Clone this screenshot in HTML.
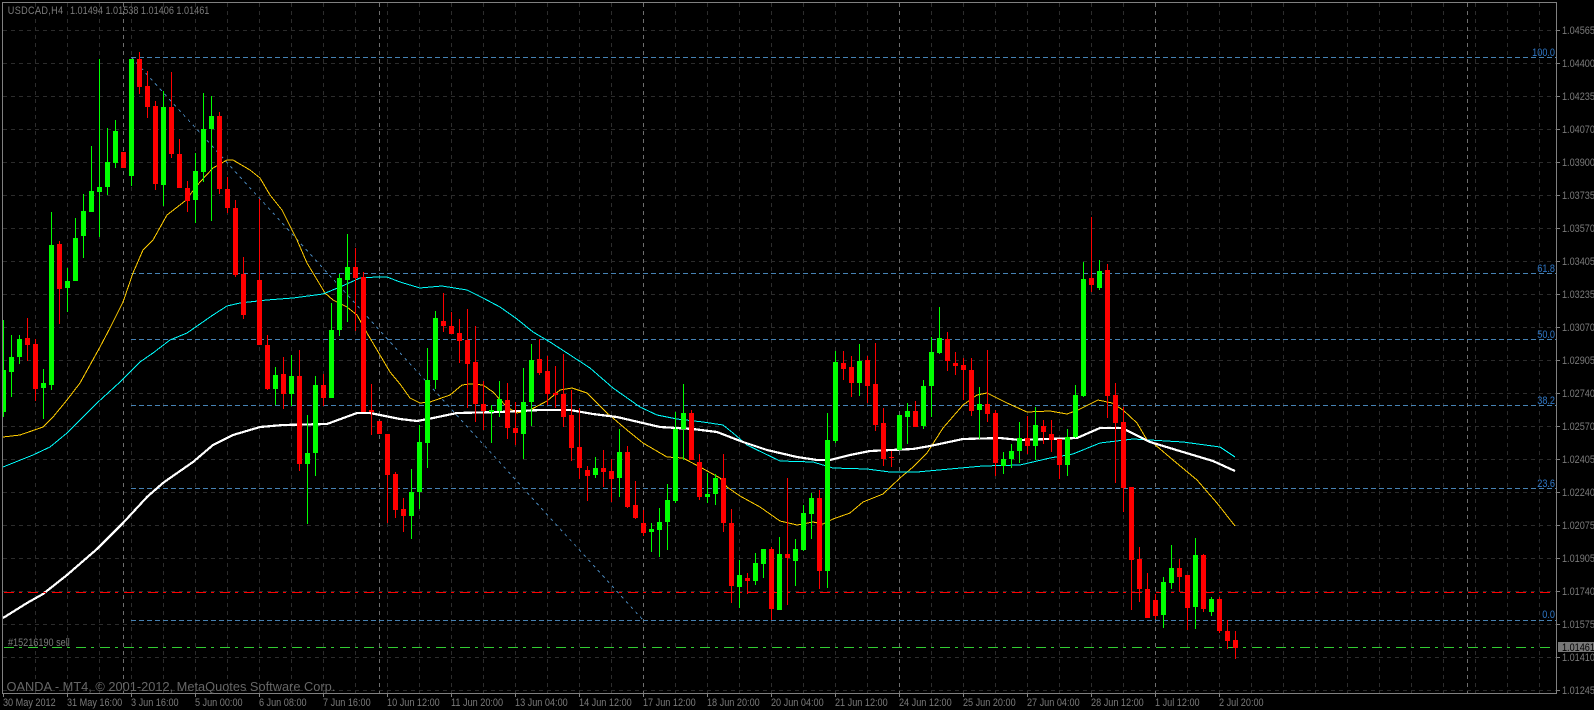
<!DOCTYPE html>
<html><head><meta charset="utf-8"><title>USDCAD,H4</title>
<style>
html,body{margin:0;padding:0;background:#000;width:1594px;height:710px;overflow:hidden}
svg{display:block}
text{font-family:"Liberation Sans",sans-serif;font-size:11px;fill:#7a7a7a}
</style></head><body>
<svg width="1594" height="710" viewBox="0 0 1594 710" xmlns="http://www.w3.org/2000/svg">
<defs><clipPath id="c"><rect x="3" y="3" width="1554" height="690"/></clipPath></defs>
<rect width="1594" height="710" fill="#000"/>
<g clip-path="url(#c)">
<!-- grid -->
<g shape-rendering="crispEdges" fill="none" stroke="#2c2c2c" stroke-width="1" stroke-dasharray="4 4">
<path d="M3 30.5H1557M3 63.5H1557M3 96.5H1557M3 129.5H1557M3 162.5H1557M3 195.5H1557M3 228.5H1557M3 261.5H1557M3 294.5H1557M3 327.5H1557M3 360.5H1557M3 393.5H1557M3 426.5H1557M3 459.5H1557M3 492.5H1557M3 525.5H1557M3 558.5H1557M3 591.5H1557M3 624.5H1557M3 657.5H1557M3 690.5H1557"/>
<path d="M35.5 3V693M67.5 3V693M99.5 3V693M131.5 3V693M163.5 3V693M195.5 3V693M227.5 3V693M259.5 3V693M291.5 3V693M323.5 3V693M355.5 3V693M387.5 3V693M419.5 3V693M451.5 3V693M483.5 3V693M515.5 3V693M547.5 3V693M579.5 3V693M611.5 3V693M643.5 3V693M675.5 3V693M707.5 3V693M739.5 3V693M771.5 3V693M803.5 3V693M835.5 3V693M867.5 3V693M899.5 3V693M931.5 3V693M963.5 3V693M995.5 3V693M1027.5 3V693M1059.5 3V693M1091.5 3V693M1123.5 3V693M1155.5 3V693M1187.5 3V693M1219.5 3V693M1251.5 3V693M1283.5 3V693M1315.5 3V693M1347.5 3V693M1379.5 3V693M1411.5 3V693M1443.5 3V693M1475.5 3V693M1507.5 3V693M1539.5 3V693"/>
</g>
<!-- period separators -->
<path shape-rendering="crispEdges" fill="none" stroke="#6e6e6e" stroke-width="1" stroke-dasharray="4 4" d="M123.5 3V693M379.5 3V693M643.5 3V693M899.5 3V693M1155.5 3V693M1467.5 3V693"/>
<!-- fibo -->
<g shape-rendering="crispEdges" fill="none" stroke="#4682b4" stroke-width="1" stroke-dasharray="5 3">
<path d="M131 57.5H1557M131 273.5H1557M131 339.5H1557M131 405.5H1557M131 488.5H1557M131 620.5H1557"/>
</g>
<path shape-rendering="crispEdges" fill="none" stroke="#4682b4" stroke-width="1" stroke-dasharray="3 4" d="M131.5 57.5L643.5 620.5"/>
<!-- MAs -->
<polyline shape-rendering="crispEdges" fill="none" stroke="#ffcc00" stroke-width="1" points="3,437 20,435 43,427 53,417 67,400 80,383 90,365 100,347 110,328 123,302 133,273 143,250 153,240 167,215 185,201 200,182 213,168 227,160 233,160 250,170 260,178 270,195 282,210 292,230 297,240 307,263 313,273 325,293 333,300 347,307 357,315 367,333 380,355 390,372 400,384 410,398 420,403 430,402 450,395 462,385 470,384 483,385 493,392 507,407 517,413 530,410 547,401 560,390 572,388 587,393 607,413 627,430 643,443 667,457 683,458 700,467 720,478 727,487 740,496 760,507 780,521 797,525 813,522 823,524 833,519 850,513 863,502 883,494 900,478 913,467 927,453 943,428 963,405 977,395 987,393 1007,403 1027,412 1050,411 1067,414 1078,410 1098,400 1112,403 1123,410 1137,423 1147,440 1153,443 1173,460 1197,480 1217,503 1235,526"/>
<polyline shape-rendering="crispEdges" fill="none" stroke="#00ffff" stroke-width="1" points="3,467 33,455 50,447 67,433 97,403 120,382 140,362 153,353 170,340 187,333 213,315 227,306 240,303 267,300 293,298 323,294 340,287 360,278 377,277 387,277 400,282 420,288 442,286 467,290 483,298 500,307 517,319 533,332 550,342 567,353 590,368 613,388 640,407 657,415 677,419 703,422 723,425 733,433 747,445 780,461 813,462 833,468 867,469 890,472 917,472 950,469 983,466 1020,465 1050,458 1073,454 1100,443 1133,439 1183,442 1220,447 1235,457"/>
<polyline shape-rendering="crispEdges" fill="none" stroke="#ffffff" stroke-width="2.2" points="3,618 27,603 43,594 67,575 97,549 123,523 147,497 163,483 170,478 193,462 213,445 233,435 260,427 283,425 327,424 357,413 370,413 400,419 417,421 433,418 457,413 500,412 540,410 570,410 593,414 617,417 660,427 693,429 717,432 743,442 767,450 797,457 817,460 830,460 850,455 870,451 913,449 930,446 963,439 1000,438 1020,440 1077,438 1100,428 1122,428 1150,442 1183,452 1213,461 1235,471"/>
<!-- level lines -->
<path shape-rendering="crispEdges" fill="none" stroke="#ff0000" stroke-width="1" stroke-dasharray="10 5 3 6" d="M4 592.5H1550"/>
<path shape-rendering="crispEdges" fill="none" stroke="#32cd32" stroke-width="1" stroke-dasharray="10 5 3 6" d="M4 647.5H1550"/>
<!-- candles -->
<g transform="translate(.5 0)" shape-rendering="crispEdges" fill="none">
<path stroke="#00ff00" stroke-width="1" d="M3 320V417M11 335V397M19 335V364M43 369V419M51 212V390M67 268V312M75 218V281M83 194V258M91 146V212M99 59V237M107 128V195M115 120V168M131 59V186M163 91V206M195 153V223M203 93V182M211 96V221M275 367V405M291 355V406M307 415V524M315 376V476M331 303V398M339 274V336M347 234V322M411 469V539M419 425V509M427 348V468M435 311V389M491 405V443M499 381V417M523 368V459M531 344V426M595 457V478M619 429V497M651 523V552M659 508V557M667 484V550M675 412V503M683 384V460M707 473V503M715 474V505M739 560V608M755 553V585M763 549V578M779 537V610M795 539V586M803 505V551M811 493V539M827 413V588M835 351V443M859 344V396M899 415V450M907 403V444M923 380V429M931 337V417M939 307V354M979 387V439M1003 452V474M1011 444V468M1019 422V463M1035 407V460M1067 429V476M1075 385V438M1083 262V397M1099 260V290M1163 577V628M1171 545V589M1195 538V629M1211 597V616"/>
<path stroke="#ff0000" stroke-width="1" d="M27 318V361M35 339V401M59 241V324M123 152V168M139 52V94M147 71V118M155 101V190M171 72V158M179 139V188M187 181V212M219 112V194M227 177V213M235 200V277M243 257V319M259 199V345M267 335V390M283 357V409M299 350V471M323 374V406M355 248V331M363 272V412M371 384V435M387 434V523M395 472V518M403 498V532M443 293V332M451 312V334M459 319V363M467 309V408M475 326V422M483 381V430M507 383V439M515 402V445M539 339V375M547 356V405M555 366V408M563 354V427M571 390V461M579 408V479M587 466V501M603 450V487M611 459V502M627 446V508M635 481V519M643 510V536M691 410V460M699 454V500M723 454V532M731 509V603M747 573V594M771 547V620M787 478V605M819 490V589M843 351V380M851 356V397M867 356V403M875 343V431M883 408V466M891 451V467M915 401V427M947 332V371M955 352V375M963 358V400M971 358V416M987 350V422M995 410V476M1027 416V454M1043 420V444M1051 420V452M1059 439V479M1091 217V292M1107 264V418M1115 383V483M1123 407V512M1131 487V610M1139 547V602M1147 573V618M1155 594V619M1179 559V592M1187 575V630M1203 554V612M1219 597V633M1227 620V649M1235 631V659"/>
<path stroke="#00ff00" stroke-width="5" d="M3 370V412M11 357V372M19 339V357M43 383V388M51 245V385M67 281V288M75 238V281M83 211V236M91 191V212M99 187V192M107 162V187M115 131V163M131 59V176M163 107V185M195 171V200M203 129V172M211 116V129M275 375V389M291 376V394M307 453V464M315 385V453M331 330V398M339 278V330M347 267V280M411 492V516M419 442V492M427 380V443M435 318V380M491 410V412M499 399V411M523 402V434M531 360V402M595 468V475M619 452V478M651 529V532M659 522V530M667 500V522M675 429V501M683 413V429M707 494V497M715 478V494M739 575V587M755 563V581M763 549V564M779 554V610M795 549V561M803 513V550M811 498V514M827 440V571M835 362V441M859 361V383M899 415V450M907 411V417M923 386V426M931 352V386M939 338V353M979 404V410M1003 459V466M1011 451V459M1019 438V451M1035 425V446M1067 437V465M1075 395V437M1083 279V396M1099 271V288M1163 582V615M1171 568V583M1195 555V607M1211 599V612"/>
<path stroke="#ff0000" stroke-width="5" d="M27 338V345M35 344V389M59 244V289M123 152V168M139 59V87M147 86V107M155 106V184M171 107V154M179 154V188M187 188V201M219 116V189M227 189V208M235 208V275M243 274V315M259 280V345M267 345V389M283 374V394M299 376V464M323 385V398M355 267V278M363 277V412M371 410V412M379 421V434M387 434V475M395 474V510M403 509V516M443 321V326M451 326V334M459 333V341M467 340V364M475 362V404M483 404V411M507 400V428M515 428V433M539 359V373M547 371V394M555 393V395M563 394V417M571 415V448M579 447V468M587 470V476M603 468V472M611 471V479M627 452V507M635 505V518M643 523V533M691 413V460M699 462V497M723 478V523M731 523V586M747 578V581M771 549V609M787 554V558M819 498V571M843 363V369M851 367V383M867 360V386M875 384V425M883 423V459M891 457V458M915 411V427M947 339V361M955 363V366M963 365V370M971 370V411M987 404V414M995 413V463M1027 438V446M1043 426V432M1051 434V440M1059 439V465M1091 278V285M1107 270V396M1115 395V423M1123 422V488M1131 487V560M1139 559V589M1147 589V618M1155 600V616M1179 568V577M1187 575V608M1203 555V609M1219 599V631M1227 631V641M1235 640V648"/>
</g>
</g>
<!-- frame -->
<path shape-rendering="crispEdges" fill="none" stroke="#808080" stroke-width="1" d="M2.5 2.5H1556.5V693.5H2.5Z"/>
<!-- ticks -->
<path shape-rendering="crispEdges" fill="none" stroke="#808080" stroke-width="1" d="M1557 30.5h3M1557 63.5h3M1557 96.5h3M1557 129.5h3M1557 162.5h3M1557 195.5h3M1557 228.5h3M1557 261.5h3M1557 294.5h3M1557 327.5h3M1557 360.5h3M1557 393.5h3M1557 426.5h3M1557 459.5h3M1557 492.5h3M1557 525.5h3M1557 558.5h3M1557 591.5h3M1557 624.5h3M1557 657.5h3M1557 690.5h3M3.5 693v4M67.5 693v4M131.5 693v4M195.5 693v4M259.5 693v4M323.5 693v4M387.5 693v4M451.5 693v4M515.5 693v4M579.5 693v4M643.5 693v4M707.5 693v4M771.5 693v4M835.5 693v4M899.5 693v4M963.5 693v4M1027.5 693v4M1091.5 693v4M1155.5 693v4M1219.5 693v4"/>
<!-- text -->
<text x="6.5" y="691" style="font-size:12.8px;fill:#666">OANDA - MT4, © 2001-2012, MetaQuotes Software Corp.</text>
<rect x="1558" y="642" width="36" height="10" fill="#787878"/>
<g transform="scale(.83 1)">
<text x="9.4" y="14" style="letter-spacing:.4px">USDCAD,H4</text>
<text x="84.3" y="14">1.01494 1.01538 1.01406 1.01461</text>
<text x="9.6" y="646">#15216190 sell</text>
<text x="1873.5" y="56" text-anchor="end" style="fill:#2f78c8">100.0</text>
<text x="1873.5" y="272" text-anchor="end" style="fill:#2f78c8">61.8</text>
<text x="1873.5" y="338" text-anchor="end" style="fill:#2f78c8">50.0</text>
<text x="1873.5" y="404" text-anchor="end" style="fill:#2f78c8">38.2</text>
<text x="1873.5" y="487" text-anchor="end" style="fill:#2f78c8">23.6</text>
<text x="1873.5" y="618" text-anchor="end" style="fill:#2f78c8">0.0</text>
<text x="1881.9" y="34">1.04565</text><text x="1881.9" y="67">1.04400</text><text x="1881.9" y="100">1.04235</text><text x="1881.9" y="133">1.04070</text><text x="1881.9" y="166">1.03900</text><text x="1881.9" y="199">1.03735</text><text x="1881.9" y="232">1.03570</text><text x="1881.9" y="265">1.03405</text><text x="1881.9" y="298">1.03235</text><text x="1881.9" y="331">1.03070</text><text x="1881.9" y="364">1.02905</text><text x="1881.9" y="397">1.02740</text><text x="1881.9" y="430">1.02570</text><text x="1881.9" y="463">1.02405</text><text x="1881.9" y="496">1.02240</text><text x="1881.9" y="529">1.02075</text><text x="1881.9" y="562">1.01905</text><text x="1881.9" y="595">1.01740</text><text x="1881.9" y="628">1.01575</text><text x="1881.9" y="661">1.01410</text><text x="1881.9" y="694">1.01245</text>
<text x="1881.9" y="651" style="fill:#000">1.01461</text>
<text x="3.6" y="706">30 May 2012</text><text x="80.7" y="706">31 May 16:00</text><text x="157.8" y="706">3 Jun 16:00</text><text x="234.9" y="706">5 Jun 00:00</text><text x="312" y="706">6 Jun 08:00</text><text x="389.2" y="706">7 Jun 16:00</text><text x="466.3" y="706">10 Jun 12:00</text><text x="543.4" y="706">11 Jun 20:00</text><text x="620.5" y="706">13 Jun 04:00</text><text x="697.6" y="706">14 Jun 12:00</text><text x="774.7" y="706">17 Jun 12:00</text><text x="851.8" y="706">18 Jun 20:00</text><text x="928.9" y="706">20 Jun 04:00</text><text x="1006" y="706">21 Jun 12:00</text><text x="1083.1" y="706">24 Jun 12:00</text><text x="1160.2" y="706">25 Jun 20:00</text><text x="1237.3" y="706">27 Jun 04:00</text><text x="1314.5" y="706">28 Jun 12:00</text><text x="1391.6" y="706">1 Jul 12:00</text><text x="1468.7" y="706">2 Jul 20:00</text>
</g>
</svg>
</body></html>
